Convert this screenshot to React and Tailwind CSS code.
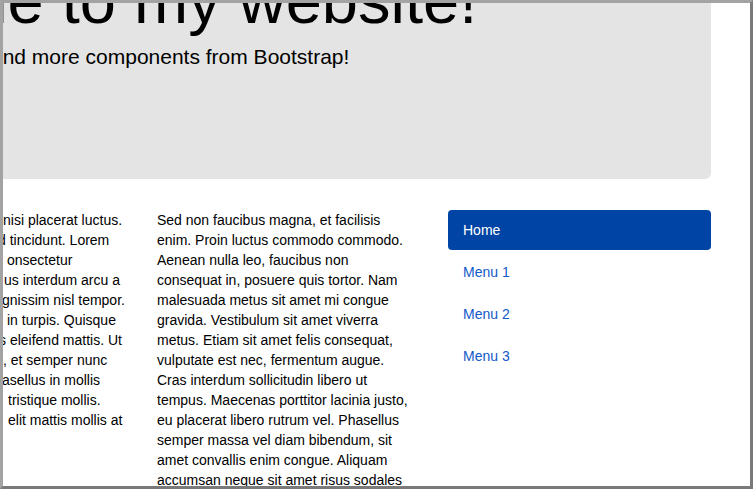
import React from 'react';

const leftLines = [
  { text: 'nisi placerat luctus.', cls: 'ml-[0px]' },
  { text: 'd tincidunt. Lorem', cls: '-ml-[5px]' },
  { text: 'onsectetur', cls: 'ml-[4px]' },
  { text: 'us interdum arcu a', cls: 'ml-[1px]' },
  { text: 'gnissim nisl tempor.', cls: '-ml-[1px]' },
  { text: 'in turpis. Quisque', cls: 'ml-[4px]' },
  { text: 's eleifend mattis. Ut', cls: '-ml-[4px]' },
  { text: ', et semper nunc', cls: 'ml-[0px]' },
  { text: 'asellus in mollis', cls: '-ml-[1px]' },
  { text: 'tristique mollis.', cls: 'ml-[5px]' },
  { text: 'elit mattis mollis at', cls: 'ml-[5px]' },
];

const midLines = [
  'Sed non faucibus magna, et facilisis',
  'enim. Proin luctus commodo commodo.',
  'Aenean nulla leo, faucibus non',
  'consequat in, posuere quis tortor. Nam',
  'malesuada metus sit amet mi congue',
  'gravida. Vestibulum sit amet viverra',
  'metus. Etiam sit amet felis consequat,',
  'vulputate est nec, fermentum augue.',
  'Cras interdum sollicitudin libero ut',
  'tempus. Maecenas porttitor lacinia justo,',
  'eu placerat libero rutrum vel. Phasellus',
  'semper massa vel diam bibendum, sit',
  'amet convallis enim congue. Aliquam',
  'accumsan neque sit amet risus sodales',
];

const menu = ['Home', 'Menu 1', 'Menu 2', 'Menu 3'];

const App = () => {
  return (
    <div
      className="w-[753px] h-[489px] overflow-hidden bg-white border-[3px] border-t-[#a3a3a3] border-l-[#a3a3a3] border-r-[#7a7a7a] border-b-[#7a7a7a] text-black"
      style={{ fontFamily: '"Liberation Sans", Arial, sans-serif' }}
    >
      {/* jumbotron */}
      <div className="w-[708px] h-[176px] overflow-hidden bg-[#e4e4e4] rounded-br-[6px]">
        <h1 className="-mt-[38px] -ml-[229px] whitespace-nowrap text-[65px] leading-[71.5px] font-normal">
          Welcome to my website!
        </h1>
        <p className="mt-[5px] -ml-[12px] whitespace-nowrap text-[21px] leading-[30px]">
          and more components from Bootstrap!
        </p>
      </div>

      {/* columns */}
      <div className="mt-[31px] grid grid-cols-[124px_261px_263px] gap-x-[30px] text-[14px] leading-[20px]">
        <div>
          {leftLines.map(line => (
            <div key={line.text} className={`whitespace-nowrap ${line.cls}`}>{line.text}</div>
          ))}
        </div>
        <p>
          {midLines.map(line => (
            <span key={line} className="block whitespace-nowrap">{line}</span>
          ))}
        </p>
        <ul className="flex flex-col gap-[2px]">
          {menu.map((item, i) => (
            <li key={item}>
              <a
                href="#"
                className={
                  i === 0
                    ? 'block px-[15px] py-[10px] rounded-[4px] bg-[#0045a6] text-white'
                    : 'block px-[15px] py-[10px] rounded-[4px] text-[#1259c9]'
                }
              >
                {item}
              </a>
            </li>
          ))}
        </ul>
      </div>
    </div>
  );
};

export default App;
